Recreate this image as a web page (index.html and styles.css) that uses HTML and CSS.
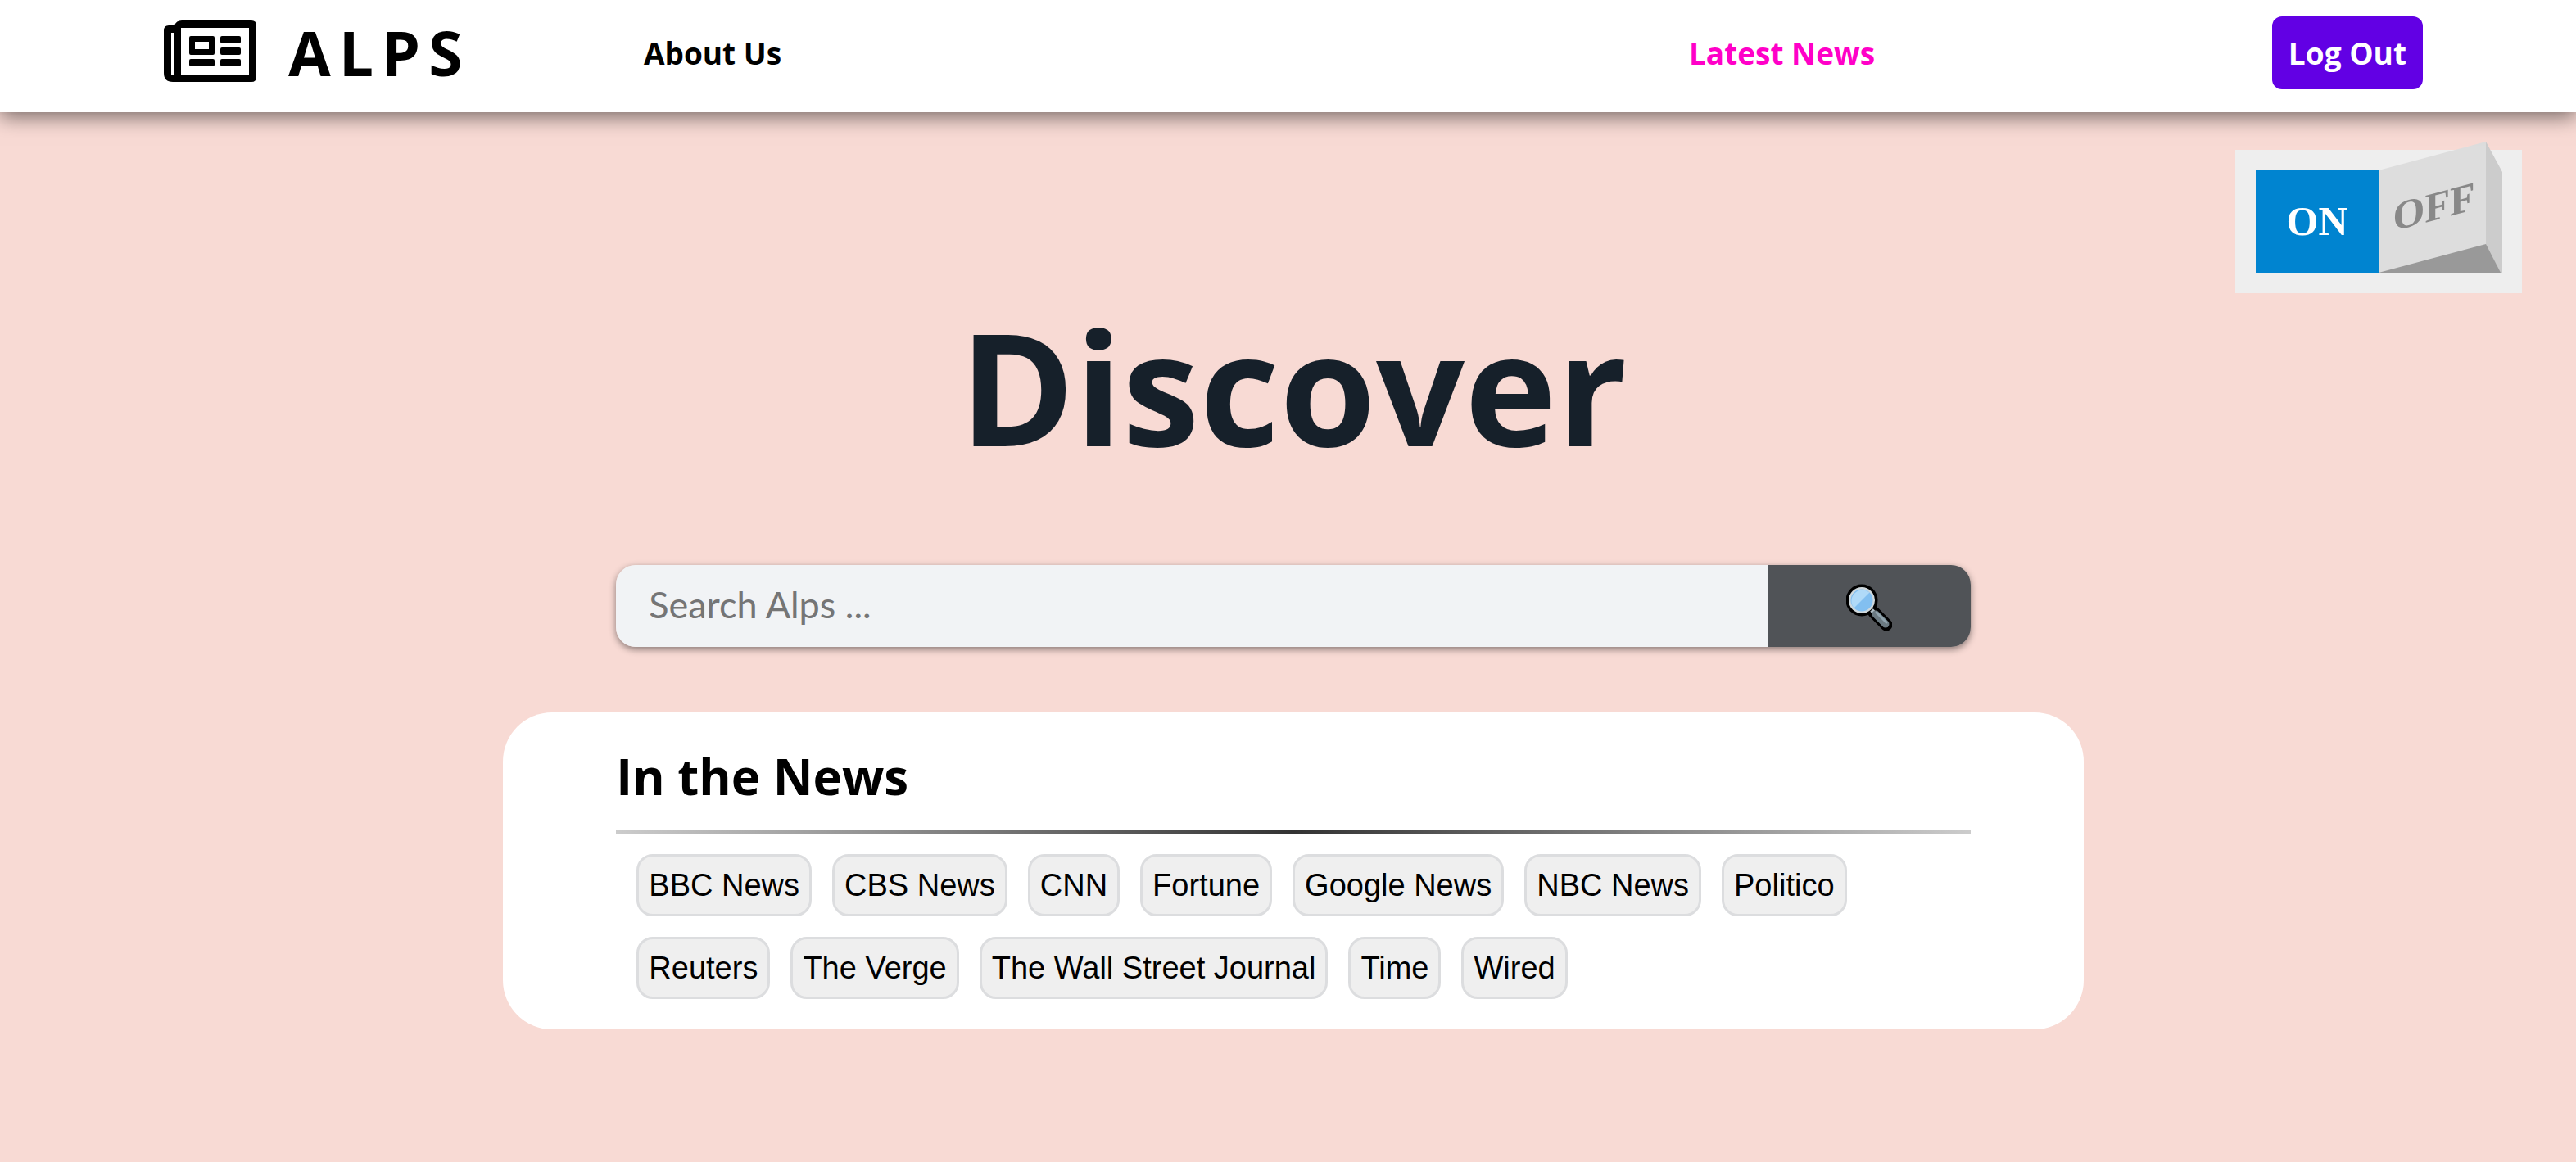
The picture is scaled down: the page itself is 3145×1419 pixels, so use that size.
FILE: index.html
```html
<!DOCTYPE html>
<html lang="en">
<head>
  <meta charset="utf-8">
  <meta name="viewport" content="width=device-width, initial-scale=1">
  <title>ALPS</title>
  <link rel="stylesheet" href="styles.css">
</head>
<body>
  <header class="navbar">
    <a class="brand" href="#">
      <svg class="brand-icon" viewBox="0 0 113 75" aria-hidden="true">
        <path fill-rule="evenodd" d="M22 0H107Q113 0 113 6V69Q113 75 107 75H11Q0 75 0 64V12Q0 6 6 6H13Q15 0 22 0ZM21 9V66H104V9ZM9 15V66H13V15Z"/>
        <path fill-rule="evenodd" d="M33 19H60Q62 19 62 21V40Q62 42 60 42H33Q31 42 31 40V21Q31 19 33 19ZM38 26V35H55V26Z"/>
        <rect x="31" y="47" width="31" height="9" rx="2"/>
        <rect x="69" y="19" width="25" height="9" rx="2"/>
        <rect x="69" y="33" width="25" height="9" rx="2"/>
        <rect x="69" y="47" width="25" height="9" rx="2"/>
      </svg>
      <span class="brand-name">ALPS</span>
    </a>
    <nav class="nav-links">
      <a class="nav-link" href="#">About Us</a>
      <a class="nav-link nav-link-active" href="#">Latest News</a>
    </nav>
    <button class="logout" type="button">Log Out</button>
  </header>

  <main class="page">
    <label class="rocker">
      <input class="rocker-input" type="checkbox" checked>
      <span class="rocker-on">ON</span>
      <span class="rocker-well">
        <span class="rocker-side"></span>
        <span class="rocker-off">OFF</span>
      </span>
    </label>

    <h1 class="title">Discover</h1>

    <form class="search">
      <input class="search-input" type="search" placeholder="Search Alps ..." aria-label="Search Alps">
      <button class="search-button" type="button" aria-label="Search">
        <svg class="search-icon" viewBox="0 0 56 57" aria-hidden="true">
          <path d="M34 35L49 50" stroke="#000" stroke-width="15" stroke-linecap="round"/>
          <circle cx="19" cy="20" r="19.500"/>
          <path d="M31 32L36 37" stroke="#b0bec5" stroke-width="5"/>
          <path d="M36 37L48 49" stroke="#6b7a82" stroke-width="9" stroke-linecap="round"/>
          <path d="M37 35L49 47" stroke="#90a4ae" stroke-width="3" stroke-linecap="round"/>
          <circle cx="19" cy="20" r="16" fill="#cfd8dc"/>
          <circle cx="19" cy="20" r="13.500" fill="#82bff0"/>
          <path d="M9.500 29.500A13.500 13.500 0 0 1 28.500 10.500Z" fill="#b0daf8"/>
        </svg>
      </button>
    </form>

    <section class="card">
      <h2 class="card-title">In the News</h2>
      <hr class="rule">
      <div class="sources">
        <button class="source" type="button">BBC News</button>
        <button class="source" type="button">CBS News</button>
        <button class="source" type="button">CNN</button>
        <button class="source" type="button">Fortune</button>
        <button class="source" type="button">Google News</button>
        <button class="source" type="button">NBC News</button>
        <button class="source" type="button">Politico</button>
        <button class="source" type="button">Reuters</button>
        <button class="source" type="button">The Verge</button>
        <button class="source" type="button">The Wall Street Journal</button>
        <button class="source" type="button">Time</button>
        <button class="source" type="button">Wired</button>
      </div>
    </section>
  </main>
</body>
</html>
```
FILE: styles.css
```css
* {
  box-sizing: border-box;
}

body {
  margin: 0;
  min-height: 100vh;
  background: #f8dad4;
  color: #000;
  font-family: "Open Sans", sans-serif;
}

/* Navigation */

.navbar {
  position: relative;
  z-index: 1;
  display: grid;
  grid-template-columns: 586fr 1988fr auto;
  align-items: center;
  padding: 13px 187px 21px 200px;
  background: #fff;
  box-shadow: 0 5px 24px rgba(0, 0, 0, 0.55);
}

.brand {
  display: flex;
  align-items: center;
  gap: 39px;
  color: inherit;
  text-decoration: none;
}

.brand-icon {
  width: 113px;
  height: 75px;
  margin-bottom: 4px;
}

.brand-name {
  font-size: 75px;
  font-weight: 700;
  line-height: 103px;
  letter-spacing: 10px;
}

.nav-links {
  display: grid;
  grid-template-columns: 1276fr 712fr;
}

.nav-link {
  color: inherit;
  font-size: 37px;
  font-weight: 700;
  line-height: 49px;
  text-decoration: none;
}

.nav-link-active {
  color: #ff00c8;
}

.logout {
  padding: 20px;
  border: 0;
  border-radius: 12px;
  background: #6200e4;
  color: #fff;
  font: 700 37px/49px "Open Sans", sans-serif;
}

/* Page */

.page {
  display: flex;
  flex-direction: column;
  align-items: center;
  padding: 46px 0 80px 13px;
}

/* Rocker switch */

.rocker {
  position: relative;
  align-self: flex-end;
  display: flex;
  margin-right: 66px;
  border: 25px solid #eee;
  font: 700 50px/125px "Liberation Serif", serif;
  text-align: center;
}

.rocker-input {
  position: absolute;
  width: 1px;
  height: 1px;
  margin: 0;
  opacity: 0;
}

.rocker-on {
  width: 150px;
  background: #0084d0;
  color: #fff;
}

.rocker-well {
  position: relative;
  width: 150px;
  height: 125px;
  background: #999;
}

.rocker-off {
  display: block;
  width: 131px;
  padding-left: 4px;
  background: #ddd;
  color: #888;
  transform: skewY(-15deg);
  transform-origin: left;
}

/* Right-hand face of the raised key */
.rocker-side {
  position: absolute;
  top: -35px;
  right: -1px;
  width: 20px;
  height: 160px;
  background: #ccc;
  clip-path: polygon(0 0, 100% 37px, 100% 100%, 18px 100%, 0 125px);
}

/* Search */

.title {
  margin: 18px 0 0;
  color: #16202a;
  font-size: 190px;
  font-weight: 700;
  line-height: 192px;
}

.search {
  display: flex;
  width: 52.8%;
  margin-top: 122px;
  border-radius: 24px;
  overflow: hidden;
  box-shadow: 0 3px 8px rgba(0, 0, 0, 0.45);
}

.search-input {
  flex: 1;
  min-width: 0;
  height: 100px;
  padding: 0 40px 4px;
  border: 0;
  background: #f1f3f5;
  font: 400 45px Lato, sans-serif;
}

.search-input::placeholder {
  color: #757575;
}

.search-button {
  display: grid;
  place-items: center;
  width: 15%;
  padding: 2px 0 0;
  border: 0;
  background: #505357;
}

.search-icon {
  width: 56px;
  height: 57px;
  fill: #000;
}

/* News sources */

.card {
  width: 61.6%;
  margin-top: 80px;
  padding: 48px 138px 37px;
  border-radius: 60px;
  background: #fff;
}

.card-title {
  margin: 0;
  font-size: 60px;
  font-weight: 700;
  line-height: 60px;
}

.rule {
  height: 4px;
  margin: 36px 0 25px;
  border: 0;
  background: linear-gradient(to right, #ccc, #333, #ccc);
}

.sources {
  display: flex;
  flex-wrap: wrap;
  gap: 25px;
  padding-left: 25px;
}

.source {
  padding: 14px 12px;
  border: 3px solid #dcdddf;
  border-radius: 20px;
  background: #efefef;
  color: #000;
  font: 400 38px/42px "Liberation Sans", sans-serif;
}
```
